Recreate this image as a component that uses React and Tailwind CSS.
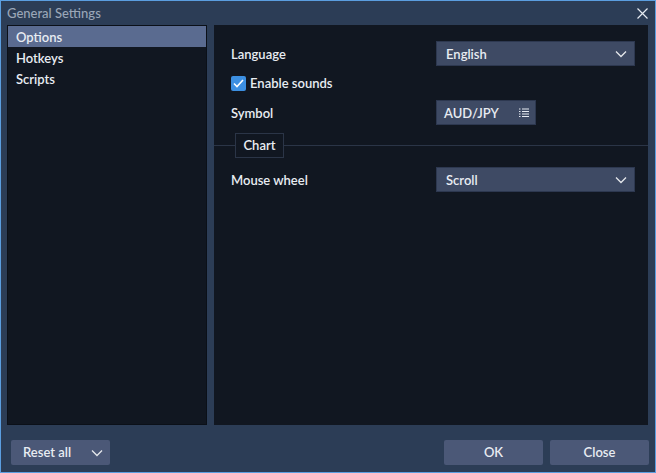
import React from "react";

const Chevron = () => (
  <svg width="12" height="8" viewBox="0 0 12 8" className="text-gray-200">
    <path d="M1 1.5 L6 6.5 L11 1.5" fill="none" stroke="currentColor" strokeWidth="1.3" />
  </svg>
);

export default function App() {
  return (
    <div
      className="w-[656px] h-[473px] bg-[#2c3d56] border border-[#5b9ee0] flex flex-col text-[13px] text-[#e8ecf2]"
      style={{ fontFamily: 'Lato, "Noto Sans", sans-serif' }}
    >
      {/* title bar */}
      <div className="h-[24px] flex items-center justify-between pl-[6px] pr-[7px]">
        <span className="text-[#9aa6b8] text-[13px] leading-none font-medium">General Settings</span>
        <svg width="11" height="11" viewBox="0 0 11 11">
          <path d="M0.5 0.5 L10.5 10.5 M10.5 0.5 L0.5 10.5" stroke="#e6ebf2" strokeWidth="1.2" />
        </svg>
      </div>
      {/* body */}
      <div className="flex gap-[7px] pl-[6px] pr-[6px] h-[400px]">
        <div className="w-[200px] bg-[#111721] border border-[#0b1018] flex flex-col">
          <div className="h-[21px] bg-[#5a6b90] flex items-center pl-[8px] pt-[2px] font-semibold">Options</div>
          <div className="h-[21px] flex items-center pl-[8px] pt-[2px] font-semibold">Hotkeys</div>
          <div className="h-[21px] flex items-center pl-[8px] pt-[2px] font-semibold">Scripts</div>
        </div>
        <div className="w-[434px] bg-[#111721] flex flex-col pt-[16px]">
          <div className="flex items-center justify-between pl-[17px] pr-[13px] h-[25px]">
            <span className="font-semibold pt-[2px]">Language</span>
            <div className="w-[199px] h-[25px] bg-[#3e4a64] border border-[#2d3850] flex items-center justify-between pl-[9px] pr-[7px]">
              <span className="font-semibold pt-[2px]">English</span>
              <Chevron />
            </div>
          </div>
          <div className="flex items-center pl-[17px] mt-[9px] h-[16px] gap-[4px]">
            <div className="w-[15px] h-[15px] rounded-[2px] bg-[#3c8fe1] flex items-center justify-center">
              <svg width="11" height="9" viewBox="0 0 11 9">
                <path d="M1 4.5 L4 7.5 L10 1" fill="none" stroke="#ffffff" strokeWidth="1.6" />
              </svg>
            </div>
            <span className="font-semibold pt-px">Enable sounds</span>
          </div>
          <div className="flex items-center justify-between pl-[17px] mt-[9px] h-[25px]">
            <span className="font-semibold pt-[2px]">Symbol</span>
            <div className="mr-[112px] w-[100px] h-[25px] bg-[#3e4a64] border border-[#2d3850] flex items-center justify-between pl-[7px] pr-[6px]">
              <span className="font-semibold pt-[2px]">AUD/JPY</span>
              <svg width="10" height="9" viewBox="0 0 10 9">
                <path d="M0 1h1.5M3 1h7M0 3.5h1.5M3 3.5h7M0 6h1.5M3 6h7M0 8.5h1.5M3 8.5h7" stroke="#e6ebf2" strokeWidth="1" />
              </svg>
            </div>
          </div>
          <div className="relative mt-[8px] h-[24px]">
            <div className="absolute left-0 right-0 top-[12px] h-px bg-[#2b3547]" />
            <div className="absolute left-[21px] top-0 h-[25px] w-[49px] bg-[#111721] border border-[#2b3547] flex items-center justify-center font-semibold pt-px">
              Chart
            </div>
          </div>
          <div className="flex items-center justify-between pl-[17px] pr-[13px] mt-[10px] h-[25px]">
            <span className="font-semibold pt-[2px]">Mouse wheel</span>
            <div className="w-[199px] h-[25px] bg-[#3e4a64] border border-[#2d3850] flex items-center justify-between pl-[9px] pr-[7px]">
              <span className="font-semibold pt-[2px]">Scroll</span>
              <Chevron />
            </div>
          </div>
        </div>
      </div>
      {/* footer */}
      <div className="flex-1 flex items-start justify-between pl-[10px] pr-[6px] pt-[15px]">
        <div className="w-[99px] h-[25px] rounded-[2px] bg-[#4b5877] flex items-center justify-between pl-[12px] pr-[7px]">
          <span className="font-semibold pt-px">Reset all</span>
          <Chevron />
        </div>
        <div className="flex gap-[7px]">
          <div className="w-[99px] h-[25px] rounded-[2px] bg-[#4b5877] flex items-center justify-center font-semibold pt-px">OK</div>
          <div className="w-[99px] h-[25px] rounded-[2px] bg-[#4b5877] flex items-center justify-center font-semibold pt-px">Close</div>
        </div>
      </div>
    </div>
  );
}
